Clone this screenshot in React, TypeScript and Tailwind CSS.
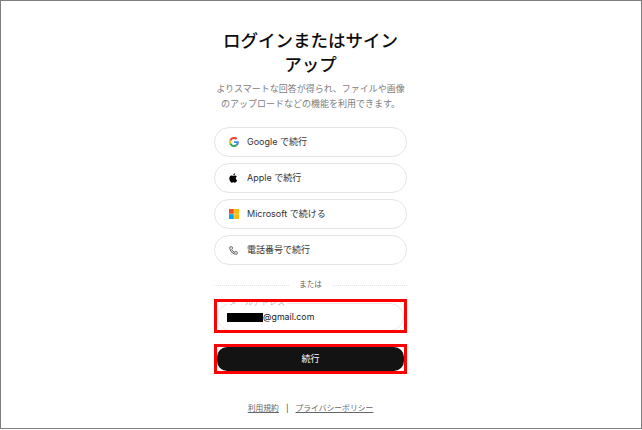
import { Phone } from "lucide-react";

const sans = "font-['Inter','Noto_Sans_CJK_JP',sans-serif]";

function GoogleIcon() {
  return (
    <svg width="10" height="10" viewBox="0 0 48 48">
      <path fill="#EA4335" d="M24 9.500c3.500 0 6.700 1.200 9.200 3.600l6.900-6.900C35.900 2.400 30.400 0 24 0 14.600 0 6.500 5.400 2.600 13.200l8 6.200C12.500 13.600 17.800 9.500 24 9.500z" />
      <path fill="#4285F4" d="M47 24.500c0-1.600-.1-3.100-.4-4.500H24v9h13c-.6 3-2.300 5.500-4.800 7.200l7.700 6c4.500-4.200 7.100-10.300 7.100-17.700z" />
      <path fill="#FBBC05" d="M10.600 28.600c-.5-1.400-.8-3-.8-4.600s.3-3.200.8-4.600l-8-6.200C.9 16.500 0 20.100 0 24s.9 7.500 2.600 10.800l8-6.200z" />
      <path fill="#34A853" d="M24 48c6.500 0 11.900-2.100 15.900-5.800l-7.700-6c-2.100 1.400-4.900 2.300-8.200 2.300-6.200 0-11.500-4.100-13.400-9.900l-8 6.200C6.500 42.600 14.600 48 24 48z" />
    </svg>
  );
}

function AppleIcon() {
  return (
    <svg width="11" height="12" viewBox="0 0 24 24" fill="#000">
      <path d="M17.05 12.540c-.03-2.620 2.140-3.880 2.240-3.940-1.220-1.780-3.120-2.030-3.800-2.060-1.620-.16-3.160.95-3.980.95-.82 0-2.090-.93-3.440-.9-1.770.03-3.400 1.030-4.310 2.610-1.840 3.190-.47 7.910 1.320 10.500.88 1.260 1.920 2.680 3.290 2.630 1.320-.05 1.820-.85 3.420-.85 1.590 0 2.050.85 3.440.82 1.420-.03 2.320-1.290 3.190-2.560 1.010-1.470 1.420-2.890 1.440-2.960-.03-.01-2.780-1.070-2.810-4.240zM14.430 4.780c.73-.88 1.220-2.110 1.080-3.330-1.050.04-2.320.7-3.070 1.580-.67.78-1.260 2.030-1.100 3.220 1.170.09 2.360-.59 3.090-1.470z" />
    </svg>
  );
}

function MicrosoftIcon() {
  return (
    <svg width="10" height="10" viewBox="0 0 10 10">
      <rect x="0" y="0" width="4.800" height="4.800" fill="#F25022" />
      <rect x="5.200" y="0" width="4.800" height="4.800" fill="#FFB900" />
      <rect x="0" y="5.200" width="4.800" height="4.800" fill="#00A4EF" />
      <rect x="5.200" y="5.200" width="4.800" height="4.800" fill="#FFB900" />
    </svg>
  );
}

function AuthButton({ icon, label }: { icon: React.ReactNode; label: string }) {
  return (
    <div className="flex items-center h-[30px] rounded-full border border-[#e5e5e5] bg-white pl-[13px] text-[9px] text-[#333]">
      <span className="flex w-[11px] justify-center items-center">{icon}</span>
      <span className="ml-[8px]">{label}</span>
    </div>
  );
}

export default function App() {
  return (
    <div className={`${sans} w-[642px] h-[429px] bg-white border border-[#7f7f7f] flex flex-col items-center overflow-hidden`}>
      <div className="w-[193px] mr-[21px] flex flex-col items-stretch pt-[28px]">
        <h1 className="text-[17.5px] leading-[24px] font-medium text-[#0d0d0d] text-center mx-[-10px]">
          ログインまたはサイン<br />アップ
        </h1>
        <p className="mt-[4px] text-[9px] leading-[15px] text-[#7d7d7d] text-center mx-[-5px]">
          よりスマートな回答が得られ、ファイルや画像<br />のアップロードなどの機能を利用できます。
        </p>
        <div className="mt-[16px] flex flex-col gap-[6px]">
          <AuthButton icon={<GoogleIcon />} label="Google で続行" />
          <AuthButton icon={<AppleIcon />} label="Apple で続行" />
          <AuthButton icon={<MicrosoftIcon />} label="Microsoft で続ける" />
          <AuthButton icon={<Phone size={9} strokeWidth={1.8} color="#111" />} label="電話番号で続行" />
        </div>
        <div className="mt-[14px] flex items-center gap-[10px] text-[7.5px] leading-[12px] text-[#666]">
          <div className="flex-1 border-t border-dotted border-[#e3e3e3]" />
          <span>または</span>
          <div className="flex-1 border-t border-dotted border-[#e3e3e3]" />
        </div>
        <div className="mt-[8px] h-[34px] border-[3px] border-[#f00] bg-white">
          <div className="relative h-full overflow-hidden">
            <div className="h-full mt-[1px] rounded-[14px] border border-[#e8e8e8] flex items-center pl-[9px] text-[8.8px] text-[#222]">
              <span className="w-[36px] h-[9px] bg-black" />
              <span>@gmail.com</span>
            </div>
            <span className="absolute left-[10px] top-[-5px] bg-white px-[2px] text-[8px] leading-[10px] text-[#bbb]">メールアドレス</span>
          </div>
        </div>
        <div className="mt-[11px] h-[30px] border-[3px] border-[#f00] bg-white">
          <div className="h-full rounded-[10px] bg-[#131313] flex items-center justify-center text-[9px] text-white">
            続行
          </div>
        </div>
        <div className="mt-[28px] flex justify-center items-center gap-[6px] text-[7.8px] leading-[12px] text-[#666]">
          <span className="underline">利用規約</span>
          <span className="text-[#444] mx-[1px]">|</span>
          <span className="underline">プライバシーポリシー</span>
        </div>
      </div>
    </div>
  );
}
